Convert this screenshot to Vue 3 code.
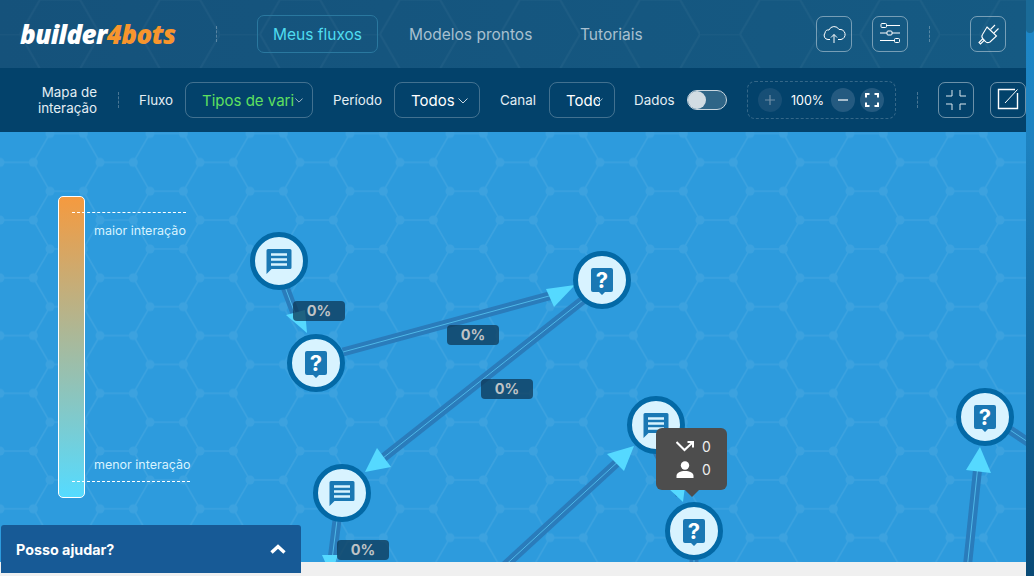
<script setup>
const nodes = [
  { x: 279, y: 261, type: 'msg' },
  { x: 316, y: 363, type: 'ask' },
  { x: 602, y: 280, type: 'ask' },
  { x: 342, y: 493, type: 'msg' },
  { x: 656, y: 425, type: 'msg' },
  { x: 694, y: 531, type: 'ask' },
  { x: 985, y: 417, type: 'ask' },
]

const edges = [
  [285, 287, 296, 316],
  [343, 352, 560, 293],
  [583, 300, 378, 462],
  [500, 570, 622, 458],
  [656, 450, 680, 495],
  [967, 570, 978, 465],
  [1010, 430, 1040, 450],
  [337, 520, 332, 560],
  [694, 558, 694, 570],
]

const arrows = [
  '286,315 307,333 305,310',
  '546,289 575,285 554,307',
  '365,472 377,448 391,467',
  '607,454 634,446 624,471',
  '668,488 683,502 686,478',
  '966,470 980,447 991,473',
  '322,555 338,555 331,575',
]

const labels = [
  { x: 293, y: 301 },
  { x: 447, y: 325 },
  { x: 481, y: 379 },
  { x: 337, y: 540 },
]
</script>

<template>
  <div class="page">
    <div class="main">
      <header class="topbar">
        <svg class="topbar-hex" width="1026" height="68">
          <defs>
            <pattern id="hexTop" patternUnits="userSpaceOnUse" x="-20" y="-35" width="120" height="69.28">
              <path d="M0 0H40L60 34.64H100L120 0M40 0L60 34.64M100 34.64L120 69.28M60 34.64L40 69.28" fill="none" stroke="#fff" stroke-opacity=".035" stroke-width="2" />
            </pattern>
          </defs>
          <rect width="1026" height="68" fill="url(#hexTop)" />
        </svg>
        <div class="logo"><span>builder</span><b>4bots</b></div>
        <i class="vsep logo-sep"></i>
        <a class="nav active">Meus fluxos</a>
        <a class="nav models">Modelos prontos</a>
        <a class="nav tutorials">Tutoriais</a>
        <button class="icon-btn cloud">
          <svg width="24" height="24" viewBox="0 0 24 24" fill="none" stroke="#fff" stroke-width="1">
            <path d="M8 17.500H6A4 4 0 0 1 3 11 3.500 3.500 0 0 1 7 8 5.500 5.500 0 0 1 17 7.500 4.800 4.800 0 0 1 19 17.500H16" />
            <path d="M12 21V12.500M9 15.500L12 12.500L15 15.500" />
          </svg>
        </button>
        <button class="icon-btn sliders">
          <svg width="24" height="24" viewBox="0 0 24 24" fill="none" stroke="#fff" stroke-width="1">
            <path d="M8.500 3.500H22M2 11H9M14 11H22M2 18.500H16.500M21.500 18.500H22" />
            <rect x="3" y="1.500" width="5.500" height="4" rx="1" />
            <rect x="9" y="9" width="5" height="4" rx="1" />
            <rect x="16.500" y="16.500" width="5" height="4" rx="1" />
          </svg>
        </button>
        <i class="vsep top-sep"></i>
        <button class="icon-btn plug">
          <svg width="24" height="24" viewBox="0 0 24 24" fill="none" stroke="#fff" stroke-width="1.100">
            <path d="M11 5L20.500 14L14 20Q11 21.500 9.500 19.500L7 17Q5 14.500 6.500 12.500Z" />
            <path d="M14.500 7.500L19 3M18 11L22.500 6.500" />
            <path d="M7 16.500L3 20.500L4.500 22L8.500 18" />
          </svg>
        </button>
      </header>

      <div class="toolbar">
        <div class="map-title">Mapa de<br />interação</div>
        <i class="vsep map-sep"></i>
        <span class="field fluxo">Fluxo</span>
        <div class="select flow"><span class="value green">Tipos de variáveis</span><svg class="chev" width="8" height="5" viewBox="0 0 10 6"><path d="M.5.5L5 5L9.500.5" /></svg></div>
        <span class="field periodo">Período</span>
        <div class="select period"><span class="value">Todos</span><svg class="chev" width="10" height="6" viewBox="0 0 10 6"><path d="M.5.5L5 5L9.500.5" /></svg></div>
        <span class="field canal">Canal</span>
        <div class="select channel"><span class="value">Todos</span><svg class="chev" width="8" height="5" viewBox="0 0 10 6"><path d="M.5.5L5 5L9.500.5" /></svg></div>
        <span class="field dados">Dados</span>
        <div class="toggle"><i></i></div>
        <div class="zoom-box">
          <span class="round dim"><svg width="12" height="12" viewBox="0 0 12 12"><path d="M6 1V11M1 6H11" stroke="#6f8ea5" stroke-width="1.200" /></svg></span>
          <span class="percent">100%</span>
          <span class="round"><svg width="12" height="12" viewBox="0 0 12 12"><path d="M1 6H11" stroke="#fff" stroke-width="1.200" /></svg></span>
          <span class="round"><svg width="14" height="14" viewBox="0 0 14 14" fill="none"><path d="M1 4.500V1H4.500M9.500 1H13V4.500M13 9.500V13H9.500M4.500 13H1V9.500" stroke="#fff" stroke-width="2" /></svg></span>
        </div>
        <i class="vsep tool-sep"></i>
        <button class="icon-btn collapse">
          <svg width="24" height="24" viewBox="0 0 24 24" fill="none" stroke="#dce8f0" stroke-width="1">
            <path d="M2 8H8V2M22 8H16V2M2 16H8V22M22 16H16V22" />
          </svg>
        </button>
        <button class="icon-btn open">
          <svg width="24" height="24" viewBox="0 0 24 24" fill="none" stroke="#fff">
            <path d="M19 1.500H2.500V20.500H21.500V5" stroke-width="1.400" />
            <path d="M9 15L21.500 1.500" stroke-width="1" />
          </svg>
        </button>
      </div>

      <section class="canvas">
        <svg class="map" width="1026" height="430" viewBox="0 132 1026 430">
          <defs>
            <pattern id="hexMap" patternUnits="userSpaceOnUse" x="50" y="18" width="100" height="57.74">
              <g opacity=".07" fill="#fff">
                <path d="M0 0H33.330L50 28.870H83.330L100 0M83.330 28.870L100 57.740M50 28.870L33.330 57.740M0 57.740H33.330" fill="none" stroke="#fff" stroke-width="1.600" />
                <circle cx="0" cy="0" r="4.500" /><circle cx="33.330" cy="0" r="4.500" />
                <circle cx="100" cy="0" r="4.500" /><circle cx="50" cy="28.870" r="4.500" />
                <circle cx="83.330" cy="28.870" r="4.500" /><circle cx="0" cy="57.740" r="4.500" />
                <circle cx="33.330" cy="57.740" r="4.500" /><circle cx="100" cy="57.740" r="4.500" />
              </g>
            </pattern>
          </defs>
          <rect x="0" y="132" width="1026" height="430" fill="url(#hexMap)" />

          <g v-for="(e, i) in edges" :key="'e' + i">
            <line :x1="e[0]" :y1="e[1]" :x2="e[2]" :y2="e[3]" stroke="#2a7cbb" stroke-width="9" />
            <line :x1="e[0]" :y1="e[1]" :x2="e[2]" :y2="e[3]" stroke="#62d8ff" stroke-opacity=".65" stroke-width="1" />
          </g>
          <polygon v-for="(a, i) in arrows" :key="'a' + i" :points="a" fill="#55d9ff" />

          <g v-for="(n, i) in nodes" :key="'n' + i" :transform="`translate(${n.x} ${n.y})`">
            <circle r="26.500" fill="#d8f3ff" stroke="#0369a6" stroke-width="5" />
            <template v-if="n.type === 'msg'">
              <path d="M-12.500 -10.500Q-12.500 -12 -11 -12H11Q12.500 -12 12.500 -10.500V6.500Q12.500 8 11 8H-7.500L-12.500 13Z" fill="#1a78b4" />
              <path d="M-8 -6.500H8M-8 -1.500H8M-8 3.500H8" stroke="#d8f3ff" stroke-width="2.600" />
            </template>
            <template v-else>
              <path d="M-11 -10Q-11 -12 -9 -12H9Q11 -12 11 -10V10Q11 12 9 12H3L0 15L-3 12H-9Q-11 12 -11 10Z" fill="#1a78b4" />
              <text class="ask" text-anchor="middle" y="8">?</text>
            </template>
          </g>

          <g v-for="(l, i) in labels" :key="'l' + i">
            <rect :x="l.x" :y="l.y" width="52" height="20" rx="4" fill="#0b3350" fill-opacity=".72" />
            <text class="pct" :x="l.x + 26" :y="l.y + 15" text-anchor="middle">0%</text>
          </g>
        </svg>

        <div class="legend">
          <div class="legend-bar"></div>
          <div class="legend-line high"></div>
          <span class="legend-text high">maior interação</span>
          <span class="legend-text low">menor interação</span>
          <div class="legend-line low"></div>
        </div>

        <div class="tip">
          <div class="tip-row">
            <svg width="18" height="11" viewBox="0 0 18 11" fill="none" stroke="#fff" stroke-width="2">
              <path d="M.500 1L8.500 9L16.500 1.500" /><path d="M11.500 1H17V6.500" />
            </svg>
            <span>0</span>
          </div>
          <div class="tip-row">
            <svg width="18" height="17" viewBox="0 0 18 17" fill="#fff">
              <circle cx="9" cy="4.500" r="4.200" /><path d="M.500 17V15C.500 11.500 4.500 10 9 10S17.500 11.500 17.500 15V17Z" />
            </svg>
            <span>0</span>
          </div>
        </div>
      </section>

      <div class="strip"></div>
    </div>
    <div class="rail"><i></i></div>

    <div class="help">
      <span>Posso ajudar?</span>
      <svg width="16" height="10" viewBox="0 0 16 10" fill="none"><path d="M1.500 8.500L8 2.500L14.500 8.500" stroke="#fff" stroke-width="3.400" /></svg>
    </div>
  </div>
</template>

<style scoped>
.page {
  position: relative;
  display: flex;
  width: 1034px;
  height: 576px;
  overflow: hidden;
  font-family: Inter, "Noto Sans", sans-serif;
  color: #fff;
}
.main { width: 1026px; display: flex; flex-direction: column; }
.rail { width: 8px; background: linear-gradient(180deg, #1e88c8 0%, #1d82c0 25%, #0a4a75 100%); }
.rail i { display: block; height: 33px; background: #1a6b98; border-radius: 0 0 4px 4px; }

.topbar {
  position: relative;
  height: 68px;
  flex: none;
  display: flex;
  align-items: center;
  background: linear-gradient(90deg, #15527b, #155a83);
}
.topbar-hex { position: absolute; left: 0; top: 0; }
.logo {
  position: relative;
  margin-left: 20px;
  width: 155px;
  font-family: "Open Sans", sans-serif;
  font-size: 26px;
  font-style: italic;
  font-weight: 800;
  letter-spacing: -.6px;
  white-space: nowrap;
}
.logo b { color: #f7952d; font-weight: 800; }
.vsep { flex: none; display: block; height: 16px; border-left: 1px dashed rgba(255, 255, 255, .28); }
.logo-sep { margin-left: 41px; }
.nav { position: relative; font-size: 15.500px; color: #a8c0d0; white-space: nowrap; }
.nav.active {
  margin-left: 40px;
  width: 121px;
  height: 38px;
  box-sizing: border-box;
  border: 1px solid #2a789f;
  border-radius: 7px;
  color: #4fdcf0;
  display: flex;
  align-items: center;
  justify-content: center;
}
.nav.models { margin-left: 31px; }
.nav.tutorials { position: absolute; left: 580px; }

.icon-btn {
  position: relative;
  flex: none;
  width: 36px;
  height: 36px;
  padding: 0;
  box-sizing: border-box;
  border: 1px solid rgba(255, 255, 255, .42);
  border-radius: 7px;
  background: transparent;
  display: flex;
  align-items: center;
  justify-content: center;
}
.cloud { position: absolute; left: 816px; top: 16px; }
.sliders { position: absolute; left: 872px; top: 16px; }
.top-sep { position: absolute; left: 929px; top: 26px; }
.plug { position: absolute; left: 970px; top: 16px; }

.toolbar {
  height: 64px;
  flex: none;
  box-sizing: border-box;
  padding-left: 37px;
  display: flex;
  align-items: center;
  background: #03426b;
  font-size: 13.400px;
}
.map-title { width: 60px; text-align: right; line-height: 16px; color: #e4eef4; white-space: nowrap; }
.map-sep { margin-left: 21px; }
.field { color: #e4eef4; white-space: nowrap; }
.fluxo { margin-left: 20px; width: 34px; }
.select {
  position: relative;
  flex: none;
  height: 36px;
  box-sizing: border-box;
  padding-left: 16px;
  display: flex;
  align-items: center;
  border: 1px solid rgba(255, 255, 255, .25);
  border-radius: 8px;
  font-size: 15px;
}
.value { overflow: hidden; white-space: nowrap; }
.green { color: #5fe05f; }
.chev { position: absolute; top: 15px; fill: none; stroke: #c8d6e0; stroke-width: 1; }
.flow { margin-left: 12px; width: 128px; }
.flow .value { width: 92px; }
.flow .chev { right: 9px; }
.periodo { margin-left: 20px; width: 49px; }
.period { margin-left: 12px; width: 86px; }
.period .chev { right: 11px; }
.canal { margin-left: 20px; width: 37px; }
.channel { margin-left: 12px; width: 66px; }
.channel .value { width: 34px; }
.channel .chev { right: 11px; }
.dados { margin-left: 19px; width: 42px; }
.toggle {
  flex: none;
  margin-left: 11px;
  width: 40px;
  height: 20px;
  box-sizing: border-box;
  border: 1px solid #c9d6df;
  border-radius: 10px;
  background: #2f6587;
}
.toggle i { display: block; width: 18px; height: 18px; border-radius: 50%; background: #d2dce3; }
.zoom-box {
  flex: none;
  margin-left: 20px;
  width: 149px;
  height: 38px;
  box-sizing: border-box;
  padding-left: 10px;
  display: flex;
  align-items: center;
  border: 1px dashed rgba(255, 255, 255, .2);
  border-radius: 8px;
}
.round {
  flex: none;
  width: 24px;
  height: 24px;
  border-radius: 50%;
  background: #245a80;
  display: flex;
  align-items: center;
  justify-content: center;
}
.round.dim { background: #174f76; }
.round:last-child { margin-left: 5px; }
.percent { width: 38px; margin: 0 2px 0 9px; font-size: 12.500px; white-space: nowrap; }
.tool-sep { margin-left: 21px; }
.collapse { margin-left: 20px; }
.open { margin-left: 16px; }

.canvas { position: relative; height: 430px; flex: none; background: #2d9bdd; overflow: hidden; }
.map { display: block; }
.ask { font: 700 22px Inter, sans-serif; fill: #fff; }
.pct { font: 700 14.500px Inter, sans-serif; fill: #bfc3c6; }

.legend { position: absolute; left: 58px; top: 64px; width: 132px; height: 302px; }
.legend-bar {
  width: 27px;
  height: 302px;
  box-sizing: border-box;
  border: 1px solid #fff;
  border-radius: 5px;
  background: linear-gradient(180deg, #f59a3f, #55dbff);
}
.legend-line { position: absolute; left: 14px; height: 0; border-top: 1px dashed #fff; }
.legend-line.high { top: 16px; width: 114px; }
.legend-line.low { top: 285px; width: 118px; }
.legend-text { position: absolute; left: 36px; font-size: 12.500px; line-height: 14px; color: #d8f3ff; white-space: nowrap; }
.legend-text.high { top: 28px; }
.legend-text.low { top: 262px; }

.tip {
  position: absolute;
  left: 656px;
  top: 296px;
  width: 71px;
  height: 62px;
  box-sizing: border-box;
  padding: 8px 0 0 20px;
  border-radius: 6px;
  background: #4d4d4d;
  display: flex;
  flex-direction: column;
  gap: 3px;
  font-size: 14px;
  color: #eee;
}
.tip::after {
  content: "";
  position: absolute;
  left: 29px;
  bottom: -7px;
  border: 7px solid transparent;
  border-top-color: #4d4d4d;
  border-bottom: 0;
}
.tip-row { height: 20px; display: flex; align-items: center; gap: 8px; }

.strip { flex: 1; background: #f0f0f0; }

.help {
  position: absolute;
  left: 1px;
  top: 525px;
  width: 300px;
  height: 48px;
  box-sizing: border-box;
  padding: 0 15px;
  display: flex;
  align-items: center;
  justify-content: space-between;
  border-radius: 3px 3px 0 0;
  background: #175a96;
  font-size: 14.300px;
  font-weight: 700;
}
</style>
